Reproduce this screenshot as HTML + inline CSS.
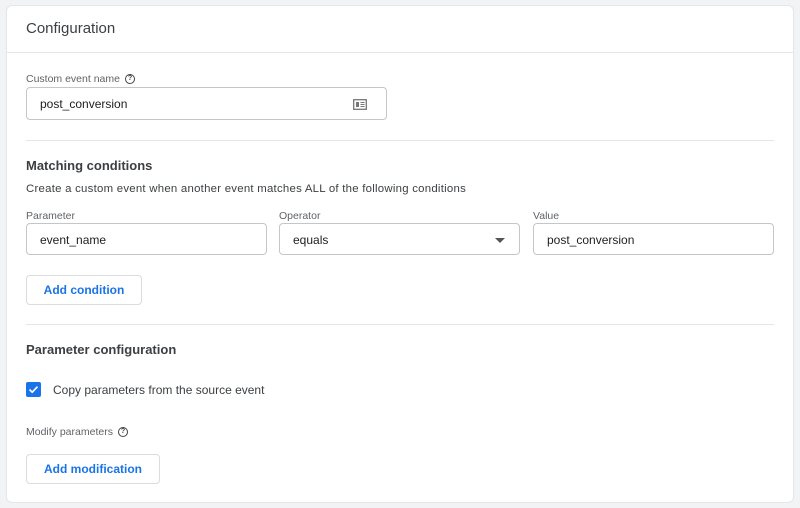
<!DOCTYPE html><html><head><style>
body{margin:0;width:800px;height:508px;background:#f1f3f4;font-family:"Liberation Sans",sans-serif;color:#202124;position:relative;overflow:hidden}
.card{position:absolute;left:6px;top:5px;width:788px;height:498px;background:#fff;border-radius:6px;border:1px solid #e6e6e6;box-sizing:border-box}
.a{position:absolute;white-space:nowrap}
.lbl{font-size:10.5px;color:#5f6368}
.inp{position:absolute;border:1px solid #c4c7c5;border-radius:4px;box-sizing:border-box;height:33px;font-size:12px;line-height:31px;padding-left:13px;color:#202124}
.hr{position:absolute;height:1px;background:#e6e6e6}
.btn{position:absolute;border:1px solid #dadce0;border-radius:4px;box-sizing:border-box;color:#1a73e8;font-size:12px;font-weight:bold;text-align:center}
.q{display:inline-block;width:8px;height:8px;border:1.3px solid #444;border-radius:50%;font-size:7px;line-height:8px;text-align:center;font-weight:bold;vertical-align:middle;margin-left:5px;color:#444}
</style></head><body>
<div class="card"></div>
<div class="a" style="left:26px;top:20px;font-size:15px;color:#3c4043">Configuration</div>
<div class="hr" style="left:7px;top:52px;width:786px"></div>
<div class="a lbl" style="left:26px;top:73px">Custom event name<span class="q">?</span></div>
<div class="inp" style="left:26px;top:87px;width:361px;line-height:33px">post_conversion
<svg style="position:absolute;right:19px;top:11px" width="14" height="11" viewBox="0 0 14 11"><rect x="0.7" y="0.7" width="12.6" height="9.6" fill="none" stroke="#777" stroke-width="1.3"/><rect x="3" y="3" width="3" height="5" fill="#777"/><path d="M7.5 3.5h4M7.5 5.5h4M7.5 7.5h4" stroke="#777"/></svg></div>
<div class="hr" style="left:26px;top:140px;width:748px"></div>
<div class="a" style="left:26px;top:158px;font-size:13px;font-weight:bold;color:#3c4043">Matching conditions</div>
<div class="a" style="left:26px;top:183px;font-size:11.4px;letter-spacing:.25px;color:#3c4043">Create a custom event when another event matches ALL of the following conditions</div>
<div class="a lbl" style="left:26px;top:210px">Parameter</div>
<div class="a lbl" style="left:279px;top:210px">Operator</div>
<div class="a lbl" style="left:533px;top:210px">Value</div>
<div class="inp" style="left:26px;top:223px;width:241px;height:32px;line-height:33px">event_name</div>
<div class="inp" style="left:279px;top:223px;width:241px;height:32px;line-height:33px">equals<span style="position:absolute;right:14px;top:14px;border-left:5px solid transparent;border-right:5px solid transparent;border-top:5px solid #555"></span></div>
<div class="inp" style="left:533px;top:223px;width:241px;height:32px;line-height:33px">post_conversion</div>
<div class="btn" style="left:26px;top:275px;width:116px;height:30px;line-height:29px">Add condition</div>
<div class="hr" style="left:26px;top:324px;width:748px"></div>
<div class="a" style="left:26px;top:342px;font-size:13px;font-weight:bold;color:#3c4043">Parameter configuration</div>
<div class="a" style="left:26px;top:382px;width:15px;height:15px;background:#1a73e8;border-radius:2px"><svg width="15" height="15"><path d="M3.5 7.5l2.7 2.7 5.3-5.5" fill="none" stroke="#fff" stroke-width="1.6"/></svg></div>
<div class="a" style="left:53px;top:383px;font-size:12px;color:#3c4043">Copy parameters from the source event</div>
<div class="a lbl" style="left:26px;top:426px">Modify parameters<span class="q">?</span></div>
<div class="btn" style="left:26px;top:454px;width:134px;height:30px;line-height:29px">Add modification</div>
</body></html>
